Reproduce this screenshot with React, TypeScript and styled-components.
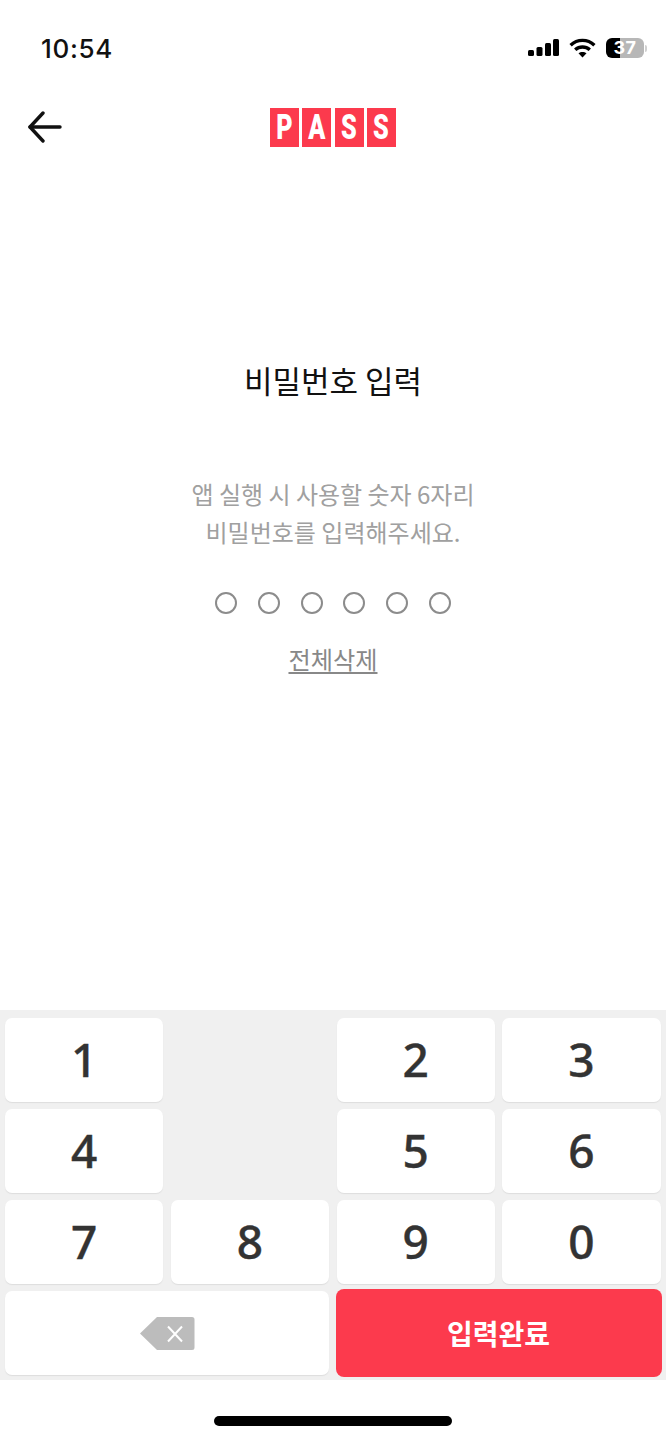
import React from "react";
import styled, { createGlobalStyle } from "styled-components";

const Global = createGlobalStyle`
  html, body { margin: 0; padding: 0; background: #fff; }
  * { box-sizing: border-box; }
  body { font-family: "Noto Sans CJK KR", "Noto Sans", sans-serif; }
`;

const Screen = styled.div`
  width: 666px;
  height: 1440px;
  display: flex;
  flex-direction: column;
  background: #fff;
  overflow: hidden;
`;

const StatusBar = styled.div`
  height: 96px;
  padding: 0 19px 0 41px;
  display: flex;
  align-items: center;
  justify-content: space-between;
`;

const Clock = styled.span`
  font-family: Inter, sans-serif;
  font-size: 26px;
  font-weight: 500;
  color: #111;
  letter-spacing: 0.7px;
`;

const StatusIcons = styled.div`
  display: flex;
  align-items: center;
  gap: 10px;
`;

const Battery = styled.div`
  width: 38px;
  height: 20px;
  border-radius: 6px;
  background: linear-gradient(90deg, #000 0 38%, #b7b7b7 38% 100%);
  color: #fff;
  font-family: Inter, sans-serif;
  font-size: 18px;
  font-weight: 700;
  line-height: 20px;
  text-align: center;
  letter-spacing: 0.5px;
`;

const BatteryWrap = styled.div`
  display: flex;
  align-items: center;
  gap: 1px;
`;

const BatteryNub = styled.div`
  width: 2px;
  height: 7px;
  border-radius: 0 2px 2px 0;
  background: #d0d0d0;
`;

const Header = styled.header`
  height: 62px;
  padding: 0 27px;
  display: grid;
  grid-template-columns: 1fr auto 1fr;
  align-items: center;
`;

const Logo = styled.div`
  display: flex;
  gap: 3.2px;
`;

const LogoTile = styled.div`
  width: 29px;
  height: 39px;
  background: #fc3a4d;
  color: #fff;
  display: flex;
  align-items: center;
  justify-content: center;
`;

const LogoLetter = styled.span`
  display: inline-block;
  font-family: Roboto, sans-serif;
  font-weight: 900;
  font-size: 35px;
  line-height: 39px;
  transform: scaleX(0.72);
`;

const Main = styled.main`
  flex: 1;
  display: flex;
  flex-direction: column;
  align-items: center;
`;

const Title = styled.h1`
  margin: 200px 0 0;
  font-size: 31px;
  line-height: 44px;
  font-weight: 400;
  color: #111;
  letter-spacing: 0;
`;

const Description = styled.p`
  margin: 73px 0 0;
  font-size: 24px;
  line-height: 38px;
  font-weight: 400;
  color: #a0a0a0;
  text-align: center;
`;

const Dots = styled.div`
  margin-top: 41px;
  display: flex;
  gap: 20.700px;
`;

const Dot = styled.span`
  width: 22px;
  height: 22px;
  border: 2px solid #8c8c8c;
  border-radius: 50%;
`;

const ClearAll = styled.button`
  margin-top: 29px;
  padding: 0;
  border: 0;
  background: none;
  font-family: inherit;
  font-size: 24.200px;
  line-height: 32px;
  font-weight: 400;
  color: #888;
  text-decoration: underline;
  text-underline-offset: 3px;
  text-decoration-thickness: 1.500px;
`;

const Keypad = styled.div`
  height: 370px;
  padding: 8px 5px 5px;
  background: #f0f0f0;
  display: grid;
  grid-template-columns: repeat(4, 158.250px);
  grid-template-rows: repeat(4, 84px);
  column-gap: 7.500px;
  row-gap: 7px;
`;

const Key = styled.button<{ $wide?: boolean }>`
  grid-column: ${(p) => (p.$wide ? "span 2" : "auto")};
  padding: ${(p) => (p.$wide ? "0" : "0 0 3px")};
  border: 0;
  border-radius: 7px;
  background: #fff;
  box-shadow: 0 1px 1px #dddddd;
  display: flex;
  align-items: center;
  justify-content: center;
  font-family: "Noto Sans", sans-serif;
  font-size: 46px;
  font-weight: 500;
  -webkit-text-stroke: 0.4px #333;
  color: #333;
`;

const KeyGap = styled.div``;

const DoneKey = styled.button`
  grid-column: span 2;
  margin: -2px -1px;
  padding: 0;
  border: 0;
  border-radius: 8px;
  background: #fc3a4d;
  color: #fff;
  font-family: "Noto Sans CJK KR", sans-serif;
  font-size: 28px;
  font-weight: 700;
`;

const HomeArea = styled.div`
  height: 60px;
  padding-top: 36px;
  display: flex;
  justify-content: center;
`;

const HomeBar = styled.div`
  width: 238px;
  height: 10px;
  border-radius: 5px;
  background: #000;
`;

const SignalIcon = () => (
  <svg width="31" height="18" viewBox="0 0 31 18" fill="#000">
    <rect x="0" y="11" width="6" height="6" rx="1.5" />
    <rect x="8.5" y="8" width="6" height="9" rx="1.5" />
    <rect x="17" y="4" width="6" height="13" rx="1.5" />
    <rect x="25" y="0" width="6" height="17" rx="1.5" />
  </svg>
);

const WifiIcon = () => (
  <svg width="27" height="20" viewBox="0 0 27 20" fill="none" stroke="#000" strokeWidth="3.4">
    <path d="M1.6 7.2C8.4.8 18.6.8 25.4 7.2" />
    <path d="M6.2 11.8c4.2-3.8 10.4-3.8 14.6 0" />
    <path d="M13.5 19.4l-4-4.1c2.3-1.9 5.7-1.900 8 0z" fill="#000" stroke="none" />
  </svg>
);

const BackIcon = () => (
  <svg width="36" height="32" viewBox="0 0 36 32" fill="none" stroke="#111" strokeWidth="3.4" strokeLinecap="round" strokeLinejoin="round" style={{ display: "block" }}>
    <path d="M3 16h30" />
    <path d="M16 2L3 16l13 14" />
  </svg>
);

const BackspaceIcon = () => (
  <svg width="56" height="35" viewBox="0 0 56 35">
    <path d="M18 1h35a2.500 2.500 0 0 1 2.500 2.500v28A2.500 2.500 0 0 1 53 34H18L1 17.500z" fill="#bcbcbc" />
    <path d="M29 10.500l14 15M43 10.500l-14 15" stroke="#fff" strokeWidth="2" fill="none" />
  </svg>
);

const rows = ["1", null, "2", "3", "4", null, "5", "6", "7", "8", "9", "0"];

export default function App() {
  return (
    <Screen>
      <Global />
      <StatusBar>
        <Clock>10:54</Clock>
        <StatusIcons>
          <SignalIcon />
          <WifiIcon />
          <BatteryWrap>
            <Battery>37</Battery>
            <BatteryNub />
          </BatteryWrap>
        </StatusIcons>
      </StatusBar>
      <Header>
        <BackIcon />
        <Logo>
          {["P", "A", "S", "S"].map((l, i) => (
            <LogoTile key={i}>
              <LogoLetter>{l}</LogoLetter>
            </LogoTile>
          ))}
        </Logo>
      </Header>
      <Main>
        <Title>비밀번호 입력</Title>
        <Description>
          앱 실행 시 사용할 숫자 6자리
          <br />
          비밀번호를 입력해주세요.
        </Description>
        <Dots>
          {Array.from({ length: 6 }).map((_, i) => (
            <Dot key={i} />
          ))}
        </Dots>
        <ClearAll>전체삭제</ClearAll>
      </Main>
      <Keypad>
        {rows.map((k, i) => (k ? <Key key={i}>{k}</Key> : <KeyGap key={i} />))}
        <Key $wide>
          <BackspaceIcon />
        </Key>
        <DoneKey>입력완료</DoneKey>
      </Keypad>
      <HomeArea>
        <HomeBar />
      </HomeArea>
    </Screen>
  );
}
